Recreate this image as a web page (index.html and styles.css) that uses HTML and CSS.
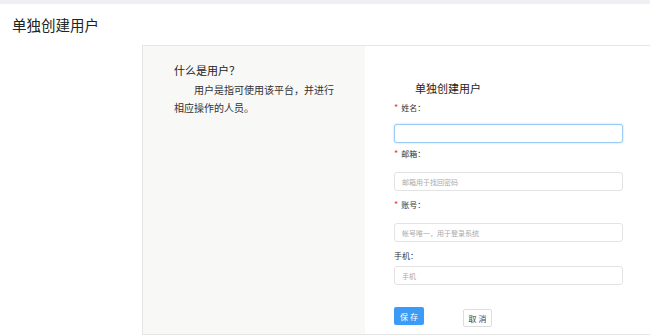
FILE: index.html
```html
<!DOCTYPE html>
<html lang="zh-CN">
<head>
<meta charset="UTF-8">
<meta name="viewport" content="width=device-width, initial-scale=1.0">
<title>单独创建用户</title>
<link rel="stylesheet" href="styles.css">
</head>
<body>
<div class="topbar"></div>
<h1 class="page-title">单独创建用户</h1>
<div class="card">
    <!-- 说明 -->
    <div class="intro">
        <h3>什么是用户？</h3>
        <p>用户是指可使用该平台，并进行相应操作的人员。</p>
    </div>

    <!-- 表单 -->
    <div class="form">
        <h2>单独创建用户</h2>
        <label class="req">姓名：</label>
        <input class="focus" type="text">
        <label class="req l2">邮箱：</label>
        <input type="text" placeholder="邮箱用于找回密码">
        <label class="req l3">账号：</label>
        <input type="text" placeholder="帐号唯一，用于登录系统">
        <label class="l4">手机：</label>
        <input class="i4" type="text" placeholder="手机">
        <div class="btns">
            <button class="btn-save">保存</button>
            <button class="btn-cancel">取消</button>
        </div>
    </div>
</div>
</body>
</html>
```

FILE: styles.css
```css
body {margin:0;padding:0;font-family:"Noto Sans CJK SC","Liberation Sans",sans-serif;background:#fff;color:#333;overflow:hidden;}
.topbar {height:4px;background:#eef0f4;}
.page-title {font-size:14.5px;font-weight:normal;line-height:20px;margin:11px 0 10px 12px;color:#222;}
.card {display:flex;margin-left:142px;width:507px;height:288px;border:1px solid #e6e6e6;border-right:none;}
.intro {width:191px;background:#f8f8f6;padding:17px 0 0 31px;}
.intro h3 {font-size:11px;font-weight:normal;line-height:14px;margin:0 0 4px;color:#222;}
.intro p {width:162px;font-size:10px;line-height:18px;text-indent:20px;margin:0;color:#333;}
.form {flex:1;padding:35px 0 0 29px;}
.form h2 {font-size:11px;font-weight:normal;line-height:14px;margin:0 0 7px 21px;color:#222;}
.form label {display:block;font-size:8px;line-height:12px;height:12px;color:#333;}
.form label.req::before {content:"*";color:#e33;margin-right:3px;font-size:9px;}
.form label.l2 {margin-top:5px;}
.form label.l3,.form label.l4 {margin-top:8px;}
.form input {display:block;box-sizing:border-box;width:229px;height:19px;margin:12px 0 0;padding:0 7px;border:1px solid #e3e3e3;border-radius:3px;font-size:7px;font-family:inherit;outline:none;background:#fff;}
.form input.focus {margin-top:10px;border-color:#9ccbf5;box-shadow:0 0 2px rgba(80,160,240,0.5);}
.form input.i4 {margin-top:4px;}
.form input::placeholder {color:#aaa;}
.btns {display:flex;align-items:flex-start;margin-top:22px;}
.btns button {font-family:inherit;font-size:8px;letter-spacing:2px;border-radius:2px;cursor:pointer;padding:0 0 0 2px;}
.btn-save {width:30px;height:18px;background:#3b9cf8;color:#fff;border:none;}
.btn-cancel {width:29px;height:18px;margin:2px 0 0 39px;background:#fff;color:#444;border:1px solid #ddd;}
```
